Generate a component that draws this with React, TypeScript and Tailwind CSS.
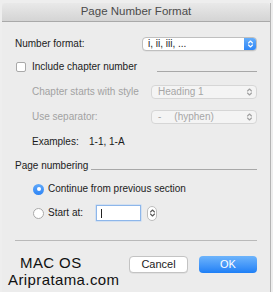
import React from 'react';

const UpDown: React.FC<{ color?: string }> = ({ color = '#ffffff' }) => (
  <svg width="7" height="10" viewBox="0 0 7 10" fill="none">
    <path d="M1.5 4 L3.5 2 L5.5 4" stroke={color} strokeWidth="1.1" strokeLinecap="round" strokeLinejoin="round" />
    <path d="M1.5 6 L3.5 8 L5.5 6" stroke={color} strokeWidth="1.1" strokeLinecap="round" strokeLinejoin="round" />
  </svg>
);

const DisabledSelect: React.FC<{ children: React.ReactNode }> = ({ children }) => (
  <div className="w-[106px] h-[14px] flex items-center justify-between rounded-[4px] border border-[#d6d6d6] bg-[#f4f4f4] pl-[6px] pr-[3px] text-[#a6a6a6]">
    <div className="flex items-center">{children}</div>
    <UpDown color="#a0a0a0" />
  </div>
);

export default function App() {
  return (
    <div
      className="w-[273px] h-[292px] bg-[#eeeeee] pt-[3px] pl-[2px] pr-[2px] overflow-hidden"
      style={{ fontFamily: '"Liberation Sans", Arial, sans-serif' }}
    >
      <div className="h-full flex flex-col bg-[#ececec] border-r border-[#b4b4b4]">
        {/* title bar */}
        <div className="h-[19px] shrink-0 flex items-center justify-center bg-gradient-to-b from-[#e9e9e9] to-[#d4d4d4] border-b border-[#a9a9a9] rounded-t-[4px]">
          <span className="text-[11.5px] text-[#4b4b4b] leading-none">Page Number Format</span>
        </div>

        <div className="flex flex-col px-[13px] text-[10px] text-[#1b1b1b] leading-none">
          {/* number format */}
          <div className="mt-[15px] h-[14px] flex items-center justify-between">
            <span>Number format:</span>
            <div className="w-[115px] h-[14px] flex rounded-[4px] border border-[#bfbfbf] bg-white overflow-hidden shadow-[0_0.5px_0.5px_rgba(0,0,0,0.08)]">
              <div className="flex-1 flex items-center pl-[5px]">i, ii, iii, ...</div>
              <div className="w-[12px] flex items-center justify-center bg-gradient-to-b from-[#66aefa] to-[#2d86f6]">
                <UpDown />
              </div>
            </div>
          </div>

          {/* include chapter number */}
          <div className="mt-[10px] h-[12px] flex items-center">
            <div className="ml-[1px] w-[10px] h-[10px] rounded-[2px] border border-[#a9a9a9] bg-white" />
            <span className="ml-[6px]">Include chapter number</span>
            <div className="ml-[20px] flex-1 self-end mb-[1px] border-b border-[#a8a8a8]" />
          </div>

          {/* chapter starts with style */}
          <div className="mt-[12px] h-[14px] flex items-center justify-between pl-[17px] text-[#a2a2a2]">
            <span>Chapter starts with style</span>
            <DisabledSelect>Heading 1</DisabledSelect>
          </div>

          {/* separator */}
          <div className="mt-[11px] h-[14px] flex items-center justify-between pl-[17px] text-[#a2a2a2]">
            <span>Use separator:</span>
            <DisabledSelect>
              <span>-</span>
              <span className="ml-[13px]">(hyphen)</span>
            </DisabledSelect>
          </div>

          {/* examples */}
          <div className="mt-[12px] h-[12px] flex items-center pl-[17px]">
            <span className="w-[57px]">Examples:</span>
            <span>1-1, 1-A</span>
          </div>

          {/* page numbering */}
          <div className="mt-[12px] h-[12px] flex items-center">
            <span>Page numbering</span>
            <div className="ml-[3px] flex-1 self-end mb-[2px] border-b border-[#a8a8a8]" />
          </div>

          {/* continue */}
          <div className="mt-[11px] h-[12px] flex items-center pl-[18px]">
            <div className="w-[11px] h-[11px] rounded-full bg-gradient-to-b from-[#5fa8fa] to-[#2c84f5] flex items-center justify-center">
              <div className="w-[4px] h-[4px] rounded-full bg-white" />
            </div>
            <span className="ml-[4px]">Continue from previous section</span>
          </div>

          {/* start at */}
          <div className="mt-[10px] h-[16px] flex items-center pl-[18px]">
            <div className="w-[11px] h-[11px] rounded-full border border-[#a9a9a9] bg-white" />
            <span className="ml-[4px] w-[48px]">Start at:</span>
            <div className="w-[45px] h-[16px] border border-[#8db6ea] bg-white flex items-center pl-[4px] shadow-[0_0_0_0.5px_#b9d4f4]">
              <div className="w-px h-[9px] bg-[#222]" />
            </div>
            <div className="ml-[6px] w-[10px] h-[15px] rounded-full border border-[#bdbdbd] bg-white flex items-center justify-center">
              <UpDown color="#5a5a5a" />
            </div>
          </div>

          {/* divider */}
          <div className="mt-[19px] border-t border-[#b9b9b9]" />

          {/* bottom row */}
          <div className="mt-[15px] flex items-start">
            <div className="-ml-[7px] -mt-[2px] text-[15px] leading-[17px] tracking-[0.4px] text-[#111]">
              <div className="pl-[12px]">MAC OS</div>
              <div>Aripratama.com</div>
            </div>
            <div className="ml-auto flex gap-[11px]">
              <div className="w-[59px] h-[17px] rounded-[4px] border border-[#c3c3c3] bg-white flex items-center justify-center text-[11px] shadow-[0_0.5px_0.5px_rgba(0,0,0,0.1)]">
                Cancel
              </div>
              <div className="w-[58px] h-[17px] rounded-[4px] bg-gradient-to-b from-[#6db4fb] to-[#1d7ff6] flex items-center justify-center text-[11px] text-white">
                OK
              </div>
            </div>
          </div>
        </div>
      </div>
    </div>
  );
}
